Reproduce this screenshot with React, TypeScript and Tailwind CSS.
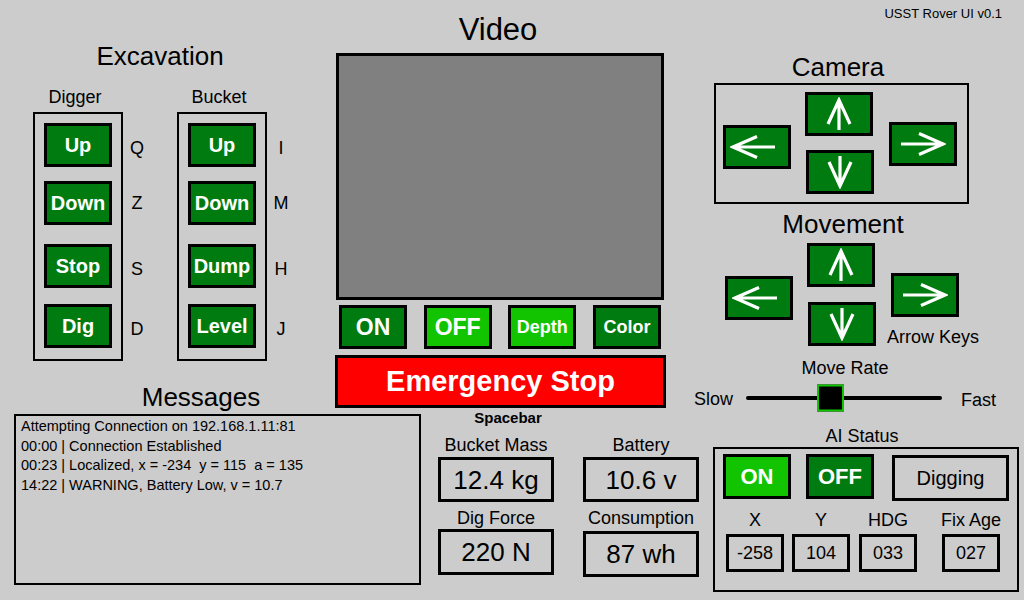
import React from 'react';

const DARK = 'bg-[#007b0f]';
const LIGHT = 'bg-[#12c400]';

function Btn({
  children,
  className = '',
  light = false,
}: {
  children: React.ReactNode;
  className?: string;
  light?: boolean;
}) {
  return (
    <div
      className={`flex items-center justify-center w-[68px] h-[44px] shrink-0 border-[3px] border-black text-white font-bold leading-none ${
        light ? LIGHT : DARK
      } ${className}`}
    >
      {children}
    </div>
  );
}

// arrows look like a stretched "←" glyph: long open head, thin shaft
function ArrowH({ flip = false }: { flip?: boolean }) {
  return (
    <svg width="46" height="26" viewBox="0 0 46 26" className={flip ? 'rotate-180' : ''}>
      <path d="M45 13H3M27 2.5L3 13L27 23.5" stroke="white" strokeWidth="3.2" fill="none" />
    </svg>
  );
}

function ArrowV({ flip = false }: { flip?: boolean }) {
  return (
    <svg width="26" height="34" viewBox="0 0 26 34" className={flip ? 'rotate-180' : ''}>
      <path d="M13 33V3M2 27L13 3L24 27" stroke="white" strokeWidth="3.2" fill="none" />
    </svg>
  );
}

const btnGaps = ['mt-[9px]', 'mt-[14px]', 'mt-[19px]', 'mt-[16px]'];
const keyGaps = ['mt-[14px]', 'mt-[11px]', 'mt-[22px]', 'mt-[16px]'];

function ExcavationGroup({ label, items, className = '' }: { label: string; items: string[][]; className?: string }) {
  return (
    <div className={`flex flex-col ${className}`}>
      <div className="w-[90px] pr-[6px] text-center text-[18px] leading-none">{label}</div>
      <div className="mt-[6px] flex items-start">
        <div className="w-[90px] h-[249px] border-2 border-black pl-[9px] flex flex-col">
          {items.map(([name], i) => (
            <Btn key={name} className={`${btnGaps[i]} text-[20px]`}>
              {name}
            </Btn>
          ))}
        </div>
        <div className="ml-[6px] w-[16px] flex flex-col">
          {items.map(([name, key], i) => (
            <div key={name} className={`${keyGaps[i]} h-[44px] flex items-center justify-center text-[18px] leading-none`}>
              {key}
            </div>
          ))}
        </div>
      </div>
    </div>
  );
}

function Stat({ label, value, labelGap, boxGap, h = 'h-[45px]' }: { label: string; value: string; labelGap: string; boxGap: string; h?: string }) {
  return (
    <>
      <div className={`${labelGap} text-center text-[18px] leading-none whitespace-nowrap`}>{label}</div>
      <div className={`${boxGap} ${h} w-[116px] border-[3px] border-black flex items-center justify-center text-[26px] leading-none`}>
        {value}
      </div>
    </>
  );
}

function AiField({ label, value, className = '' }: { label: string; value: string; className?: string }) {
  return (
    <div className={`w-[58px] flex flex-col items-center ${className}`}>
      <div className="text-[18px] leading-none whitespace-nowrap">{label}</div>
      <div className="mt-[5px] w-[58px] h-[38px] border-[3px] border-black flex items-center justify-center text-[18px] leading-none">
        {value}
      </div>
    </div>
  );
}

const messages = [
  'Attempting Connection on 192.168.1.11:81',
  '00:00 | Connection Established',
  '00:23 | Localized, x = -234\u00a0 y = 115\u00a0 a = 135',
  '14:22 | WARNING, Battery Low, v = 10.7',
];

export default function App() {
  return (
    <div className="w-[1024px] h-[600px] bg-[#cccccc] flex overflow-hidden text-black font-['Liberation_Sans',Arial,sans-serif]">
      {/* Left: excavation + messages */}
      <div className="w-[330px] shrink-0 flex flex-col">
        <div className="mt-[43px] w-[320px] text-center text-[26px] leading-none">Excavation</div>
        <div className="mt-[19px] pl-[33px] flex items-start">
          <ExcavationGroup
            label="Digger"
            items={[
              ['Up', 'Q'],
              ['Down', 'Z'],
              ['Stop', 'S'],
              ['Dig', 'D'],
            ]}
          />
          <ExcavationGroup
            className="ml-[32px]"
            label="Bucket"
            items={[
              ['Up', 'I'],
              ['Down', 'M'],
              ['Dump', 'H'],
              ['Level', 'J'],
            ]}
          />
        </div>

        <div className="mt-[23px] w-[402px] text-center text-[26px] leading-none">Messages</div>
        <div className="mt-[4px] ml-[14px] w-[407px] h-[171px] shrink-0 border-2 border-black pl-[5px] pt-[1px] text-[14.5px] leading-[19.6px] whitespace-pre">
          {messages.map((m) => (
            <div key={m}>{m}</div>
          ))}
        </div>
      </div>

      {/* Center: video + stats */}
      <div className="w-[360px] shrink-0 flex flex-col">
        <div className="mt-[14px] w-[336px] text-center text-[31px] leading-none">Video</div>
        <div className="mt-[8px] ml-[6px] w-[328px] h-[247px] border-[3px] border-black bg-[#808080]" />
        <div className="mt-[5px] ml-[9px] w-[322px] flex justify-between">
          <Btn className="text-[23px]">ON</Btn>
          <Btn light className="text-[23px]">OFF</Btn>
          <Btn light className="text-[18px]">Depth</Btn>
          <Btn className="text-[18px]">Color</Btn>
        </div>
        <div className="mt-[6px] ml-[5px] w-[331px] h-[53px] border-[3px] border-black bg-[#ff0000] flex items-center justify-center text-white font-bold text-[29px] leading-none">
          Emergency Stop
        </div>
        <div className="mt-[2px] w-[340px] pl-[16px] text-center font-bold text-[15px] leading-none">Spacebar</div>

        <div className="mt-[11px] ml-[108px] flex items-start">
          <div className="w-[116px] flex flex-col">
            <Stat label="Bucket Mass" value="12.4 kg" labelGap="" boxGap="mt-[3px]" />
            <Stat label="Dig Force" value="220 N" labelGap="mt-[7px]" boxGap="mt-[2px]" h="h-[46px]" />
          </div>
          <div className="ml-[29px] w-[116px] flex flex-col">
            <Stat label="Battery" value="10.6 v" labelGap="" boxGap="mt-[3px]" />
            <Stat label="Consumption" value="87 wh" labelGap="mt-[7px]" boxGap="mt-[4px]" h="h-[46px]" />
          </div>
        </div>
      </div>

      {/* Right: camera, movement, rate, AI status */}
      <div className="w-[334px] shrink-0 flex flex-col">
        <div className="mt-[7px] pr-[22px] text-right text-[13px] leading-none">USST Rover UI v0.1</div>

        <div className="mt-[34px] w-[296px] text-center text-[26px] leading-none">Camera</div>
        <div className="mt-[3px] ml-[24px] w-[255px] h-[121px] border-2 border-black flex items-start">
          <Btn className="ml-[7px] mt-[40px] pr-[9px]">
            <ArrowH />
          </Btn>
          <div className="ml-[14px] mt-[7px] flex flex-col">
            <Btn>
              <ArrowV />
            </Btn>
            <Btn className="mt-[14px] ml-[1px]">
              <ArrowV flip />
            </Btn>
          </div>
          <Btn className="ml-[15px] mt-[37px]">
            <ArrowH flip />
          </Btn>
        </div>

        <div className="mt-[7px] w-[306px] text-center text-[26px] leading-none">Movement</div>
        <div className="mt-[6px] flex items-start">
          <Btn className="ml-[35px] mt-[33px] pr-[9px]">
            <ArrowH />
          </Btn>
          <div className="ml-[14px] flex flex-col">
            <Btn>
              <ArrowV />
            </Btn>
            <Btn className="mt-[15px] ml-[1px]">
              <ArrowV flip />
            </Btn>
          </div>
          <div className="ml-[15px] mt-[30px] flex flex-col">
            <Btn>
              <ArrowH flip />
            </Btn>
            <div className="mt-[11px] -ml-[4px] text-[18px] leading-none whitespace-nowrap">Arrow Keys</div>
          </div>
        </div>

        <div className="mt-[13px] w-[310px] text-center text-[18px] leading-none">Move Rate</div>
        <div className="mt-[7px] h-[27px] flex items-center">
          <div className="ml-[4px] w-[39px] text-[18px] leading-none pt-[2px]">Slow</div>
          <div className="ml-[13px] relative w-[196px] h-[4px] bg-black rounded-full">
            <div className="absolute left-[71px] top-1/2 -translate-y-1/2 w-[27px] h-[27px] bg-black border-2 border-[#12c400]" />
          </div>
          <div className="ml-[19px] text-[18px] leading-none pt-[4px]">Fast</div>
        </div>

        <div className="mt-[16px] w-[330px] pl-[14px] text-center text-[18px] leading-none">AI Status</div>
        <div className="mt-[2px] ml-[23px] w-[306px] h-[145px] border-2 border-black flex flex-col">
          <div className="mt-[5px] ml-[8px] flex items-start">
            <Btn light className="h-[45px] text-[22px]">ON</Btn>
            <Btn className="ml-[15px] h-[45px] text-[22px]">OFF</Btn>
            <div className="ml-[18px] mt-[1px] w-[117px] h-[46px] border-[3px] border-black flex items-center justify-center text-[20px] leading-none">
              Digging
            </div>
          </div>
          <div className="mt-[10px] flex items-start">
            <AiField className="ml-[11px]" label="X" value="-258" />
            <AiField className="ml-[8px]" label="Y" value="104" />
            <AiField className="ml-[9px]" label="HDG" value="033" />
            <AiField className="ml-[25px]" label="Fix Age" value="027" />
          </div>
        </div>
      </div>
    </div>
  );
}
